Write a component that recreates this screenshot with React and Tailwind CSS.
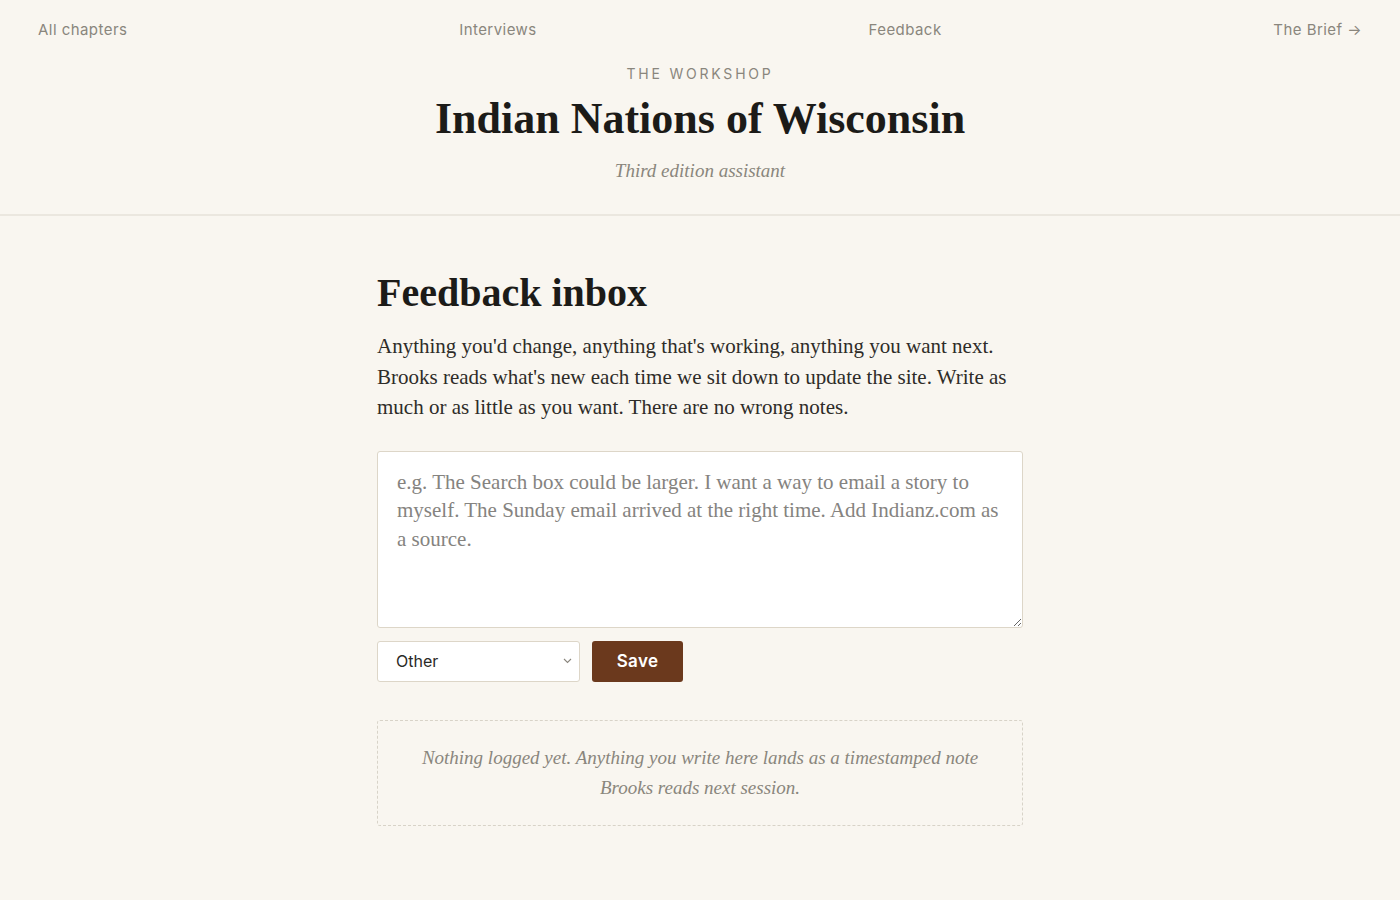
import { useState } from "react";

const serif = "font-['Liberation_Serif',serif]";
const sans = "font-['Inter',sans-serif]";

function TopNav() {
  return (
    <nav className={`flex items-center justify-between px-[38px] pt-[19px] text-[15px] tracking-[0.03em] text-[#8a867d] ${sans}`}>
      <a href="#">All chapters</a>
      <a href="#">Interviews</a>
      <a href="#">Feedback</a>
      <a href="#">The Brief →</a>
    </nav>
  );
}

function Masthead() {
  return (
    <header className="border-b-2 border-[#ebe7df] pb-[29px] pt-[21px] text-center">
      <p className={`text-[14px] uppercase tracking-[0.2em] text-[#8a867d] ${sans}`}>The Workshop</p>
      <h1 className={`mt-[7px] text-[44px] leading-[56px] font-semibold text-[#1c1b18] ${serif}`}>
        Indian Nations of Wisconsin
      </h1>
      <p className={`mt-[10px] text-[19px] italic text-[#8a867d] ${serif}`}>Third edition assistant</p>
    </header>
  );
}

export default function App() {
  const [note, setNote] = useState("");
  const [kind, setKind] = useState("Other");

  return (
    <div className="min-h-[900px] bg-[#f9f6f0]">
      <TopNav />
      <Masthead />
      <main className="mx-auto w-[646px] pt-[52px] pb-[70px]">
        <h2 className={`text-[40px] leading-[50px] font-semibold text-[#1c1b18] ${serif}`}>Feedback inbox</h2>
        <p className={`mt-[13px] text-[21px] leading-[30.5px] text-[#2e2c28] ${serif}`}>
          Anything you'd change, anything that's working, anything you want next. Brooks reads what's new each
          time we sit down to update the site. Write as much or as little as you want. There are no wrong notes.
        </p>
        <textarea
          value={note}
          onChange={(e) => setNote(e.target.value)}
          placeholder="e.g. The Search box could be larger. I want a way to email a story to myself. The Sunday email arrived at the right time. Add Indianz.com as a source."
          className={`mt-[28px] block h-[177px] w-full rounded-[3px] border border-[#ddd6c8] bg-white px-[19px] py-[16px] text-[21px] leading-[28.5px] text-[#2e2c28] outline-none placeholder:text-[#858380] ${serif}`}
        />
        <div className="mt-[13px] flex items-center gap-[12px]">
          <div className="relative">
            <select
              value={kind}
              onChange={(e) => setKind(e.target.value)}
              className={`h-[41px] w-[203px] appearance-none rounded-[3px] border border-[#ddd6c8] bg-white pl-[18px] text-[16px] text-[#2b2a27] outline-none ${sans}`}
            >
              <option>Bug</option>
              <option>Idea</option>
              <option>Praise</option>
              <option>Other</option>
            </select>
            <svg className="pointer-events-none absolute right-[8px] top-[17px]" width="9" height="6" viewBox="0 0 9 6" fill="none">
              <path d="M1 1l3.5 3.5L8 1" stroke="#8a867d" strokeWidth="1.1" />
            </svg>
          </div>
          <button className={`h-[41px] w-[91px] rounded-[3px] bg-[#6b391d] pt-[2px] text-[17px] font-semibold tracking-[0.02em] text-white ${sans}`}>
            Save
          </button>
        </div>
        <div className="mt-[38px] rounded-[3px] border border-dashed border-[#d8d3c8] px-[24px] py-[22px] text-center">
          <p className={`text-[19px] italic leading-[30px] text-[#8a867d] ${serif}`}>
            Nothing logged yet. Anything you write here lands as a timestamped note Brooks reads next session.
          </p>
        </div>
      </main>
    </div>
  );
}
